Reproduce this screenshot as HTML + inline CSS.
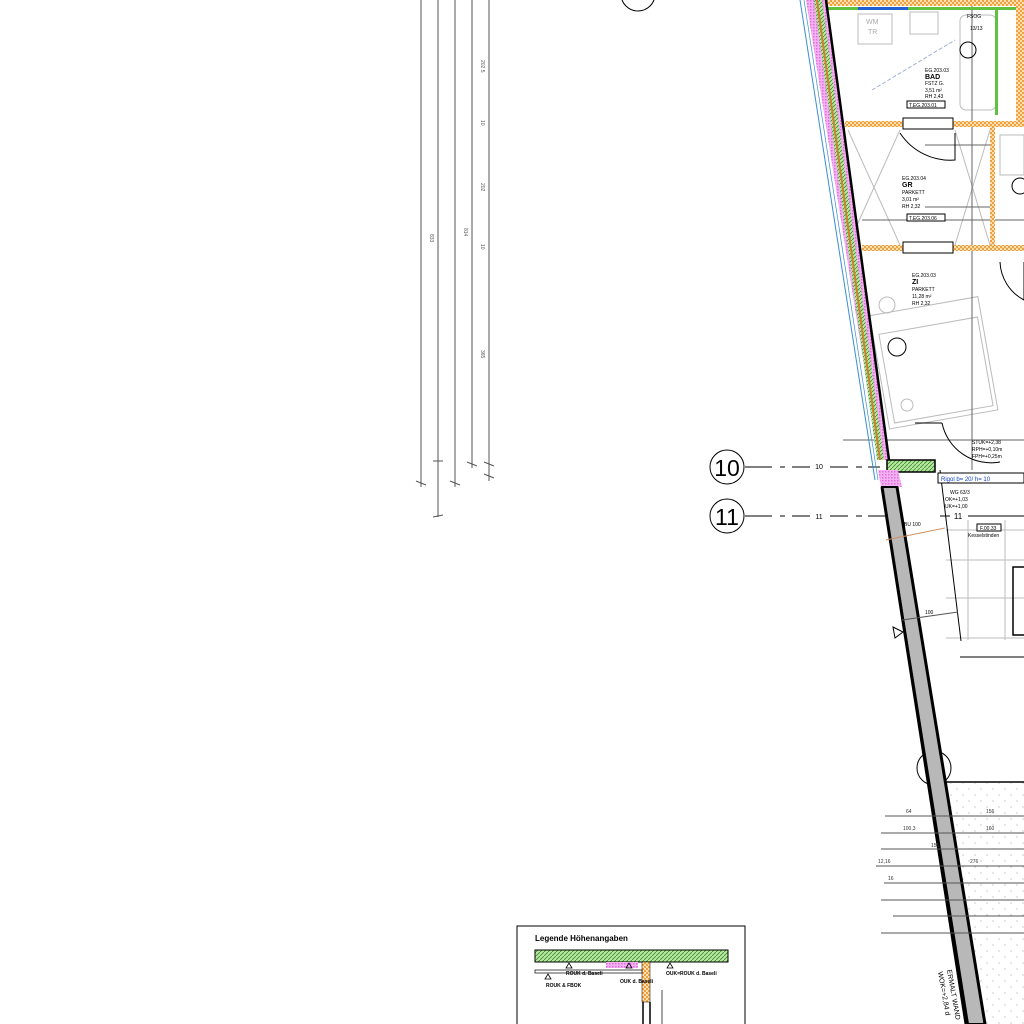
<!DOCTYPE html>
<html><head><meta charset="utf-8"><style>
html,body{margin:0;padding:0;background:#fff;width:1024px;height:1024px;overflow:hidden}
svg{display:block}
text{font-family:"Liberation Sans",sans-serif}
</style></head><body>
<svg width="1024" height="1024" viewBox="0 0 1024 1024" xmlns="http://www.w3.org/2000/svg">
<defs>
<pattern id="org" width="4" height="4" patternUnits="userSpaceOnUse"><rect width="4" height="4" fill="#f0a040"/><rect width="2" height="2" fill="#fde0b0"/><rect x="2" y="2" width="2" height="2" fill="#fde0b0"/></pattern>
<pattern id="grn" width="4" height="4" patternUnits="userSpaceOnUse"><rect width="4" height="4" fill="#b8e8a0"/><path d="M0 4L4 0" stroke="#3a8a30" stroke-width="0.8"/></pattern>
<pattern id="pnk" width="3" height="3" patternUnits="userSpaceOnUse"><rect width="3" height="3" fill="#f4b0f0"/><rect width="1.5" height="1.5" fill="#e070e0"/></pattern>
<pattern id="dots" width="12" height="12" patternUnits="userSpaceOnUse"><rect width="12" height="12" fill="#fff"/><circle cx="3" cy="3" r="0.6" fill="#aaa"/><circle cx="9" cy="9" r="0.6" fill="#aaa"/></pattern>
</defs>

<!-- left dimension lines -->
<g stroke="#555" stroke-width="1">
<line x1="421" y1="0" x2="421" y2="487"/><line x1="438" y1="0" x2="438" y2="517"/>
<line x1="455" y1="0" x2="455" y2="487"/><line x1="472" y1="0" x2="472" y2="468"/>
<line x1="489" y1="0" x2="489" y2="481"/>
<line x1="416" y1="481" x2="426" y2="485"/><line x1="433" y1="461" x2="443" y2="461"/><line x1="433" y1="517" x2="443" y2="515"/>
<line x1="450" y1="481" x2="460" y2="485"/><line x1="467" y1="462" x2="477" y2="466"/><line x1="484" y1="462" x2="494" y2="466"/><line x1="484" y1="474" x2="494" y2="478"/>
</g>
<g font-size="5" fill="#555">
<text x="430" y="234" transform="rotate(90 430 234)">833</text>
<text x="464" y="228" transform="rotate(90 464 228)">814</text>
<text x="481" y="60" transform="rotate(90 481 60)">202.5</text>
<text x="481" y="120" transform="rotate(90 481 120)">10</text>
<text x="481" y="183" transform="rotate(90 481 183)">202</text>
<text x="481" y="244" transform="rotate(90 481 244)">10</text>
<text x="481" y="350" transform="rotate(90 481 350)">365</text>
</g>

<!-- grid circles -->
<g stroke="#000" fill="none" stroke-width="1">
<circle cx="638" cy="-6" r="17"/>
<circle cx="727" cy="467" r="17"/><circle cx="727" cy="516" r="17"/>
<line x1="745" y1="467" x2="772" y2="467"/><line x1="780" y1="467" x2="785" y2="467"/><line x1="792" y1="467" x2="810" y2="467"/><line x1="830" y1="467" x2="848" y2="467"/><line x1="856" y1="467" x2="862" y2="467"/><line x1="868" y1="467" x2="880" y2="467"/>
<line x1="745" y1="516" x2="772" y2="516"/><line x1="780" y1="516" x2="785" y2="516"/><line x1="792" y1="516" x2="810" y2="516"/><line x1="830" y1="516" x2="848" y2="516"/><line x1="856" y1="516" x2="862" y2="516"/><line x1="868" y1="516" x2="885" y2="516"/>
<line x1="940" y1="516" x2="950" y2="516"/><line x1="968" y1="516" x2="1024" y2="516"/>
</g>
<text x="727" y="476" font-size="23" text-anchor="middle" fill="#000">10</text>
<text x="727" y="525" font-size="23" text-anchor="middle" fill="#000">11</text>
<text x="819" y="469" font-size="7" text-anchor="middle">10</text>
<text x="819" y="519" font-size="7" text-anchor="middle">11</text>
<text x="958" y="519" font-size="8" text-anchor="middle">11</text>

<!-- room interior elements -->
<g stroke="#bbb" fill="none" stroke-width="1">
<rect x="858" y="14" width="34" height="30"/><rect x="910" y="12" width="28" height="22"/>
<rect x="960" y="15" width="36" height="95" rx="6"/>
<path d="M848 130L900 245M848 245L900 130M955 130L990 245M955 245L990 130"/>
<rect x="886" y="325" width="100" height="90" transform="rotate(-10 936 370)"/>
<rect x="880" y="305" width="110" height="115" transform="rotate(-10 936 370)"/>
<circle cx="887" cy="305" r="8"/><circle cx="907" cy="405" r="6"/>
<path d="M946 530H1024M946 560H1024M946 598H1024M946 638H1024M968 520V640M1005 520V640"/>
<path d="M1000 135h24v40h-24z"/>
</g>
<g stroke="#666" stroke-width="1">
<line x1="972" y1="0" x2="972" y2="470"/>
<line x1="843" y1="440" x2="1024" y2="440"/>
<line x1="925" y1="145" x2="990" y2="145"/><line x1="925" y1="207" x2="990" y2="207"/>
<line x1="862" y1="220" x2="1024" y2="220"/>
</g>
<g stroke="#000" fill="none" stroke-width="1">
<path d="M900 133A60 60 0 0 0 955 160V133"/>
<path d="M1000 262A45 45 0 0 0 1024 300V262"/>
<path d="M942 423A50 50 0 0 0 1000 462"/>
<path d="M915 423H942"/>
<path d="M940 470L961 641"/>
<line x1="960" y1="657" x2="1024" y2="657"/>
<circle cx="968" cy="50" r="8"/><circle cx="897" cy="347" r="9"/><circle cx="1020" cy="186" r="8"/>
<circle cx="934" cy="768" r="17"/>
<rect x="1013" y="567" width="12" height="68" stroke-width="1.5"/>
</g>

<!-- horizontal walls -->
<rect x="820" y="0" width="204" height="6" fill="url(#org)"/>
<rect x="826" y="7" width="198" height="3" fill="#60c040"/>
<rect x="858" y="7" width="50" height="3" fill="#2060d0"/>
<rect x="845" y="121" width="179" height="6" fill="url(#org)"/>
<rect x="862" y="245" width="162" height="6" fill="url(#org)"/>
<rect x="990" y="121" width="5" height="130" fill="url(#org)"/>
<rect x="1016" y="0" width="8" height="121" fill="url(#org)"/>
<rect x="995" y="10" width="3" height="105" fill="#60c040"/>
<g fill="#fff" stroke="#000" stroke-width="1">
<rect x="903" y="118" width="50" height="11"/><rect x="903" y="242" width="50" height="11"/>
<rect x="938" y="473" width="86" height="10"/>
</g>
<text x="941" y="481" font-size="6" fill="#1040c0">Rigol b= 20/ h= 10</text>

<!-- upper slanted wall layers -->
<polygon points="806,0 826,0 889,460 879,460" fill="url(#pnk)"/>
<polygon points="814,0 822,0 884,460 877,460" fill="url(#grn)"/>
<line x1="817" y1="0" x2="880" y2="460" stroke="#d08030" stroke-width="2"/>
<line x1="826" y1="0" x2="889" y2="460" stroke="#000" stroke-width="2.5"/>
<line x1="800" y1="0" x2="875" y2="480" stroke="#3a8ed0" stroke-width="1"/>
<line x1="804" y1="0" x2="878" y2="480" stroke="#3a8ed0" stroke-width="0.7"/>
<rect x="887" y="460" width="48" height="12" fill="url(#grn)" stroke="#000" stroke-width="1.5"/>
<polygon points="878,470 898,470 902,487 881,487" fill="url(#pnk)"/>

<!-- dotted exterior -->
<polygon points="940,783 1024,783 1024,1024 985,1024" fill="url(#dots)"/>
<line x1="940" y1="782" x2="1024" y2="782" stroke="#000" stroke-width="1.5"/>
<!-- lower gray wall -->
<polygon points="882,487 897,487 985,1024 968,1024" fill="#b8b8b8" stroke="#000" stroke-width="2"/>
<line x1="882" y1="487" x2="966" y2="1024" stroke="#000" stroke-width="3"/>
<line x1="897" y1="487" x2="985" y2="1024" stroke="#000" stroke-width="3"/>
<line x1="886" y1="540" x2="945" y2="528" stroke="#d09060" stroke-width="1"/>
<line x1="902" y1="620" x2="958" y2="612" stroke="#555" stroke-width="1"/>
<path d="M893 627l10 5-8 6z" fill="none" stroke="#000"/>

<!-- bottom-right dimension lines -->
<g stroke="#555" stroke-width="1">
<line x1="885" y1="816" x2="1024" y2="816"/><line x1="881" y1="833" x2="1024" y2="833"/>
<line x1="881" y1="849" x2="1024" y2="849"/><line x1="876" y1="866" x2="1024" y2="866"/>
<line x1="884" y1="883" x2="1024" y2="883"/><line x1="881" y1="900" x2="1024" y2="900"/>
<line x1="893" y1="916" x2="1024" y2="916"/><line x1="881" y1="933" x2="1024" y2="933"/>
</g>
<g font-size="5" fill="#333">
<text x="906" y="813">64</text><text x="986" y="813">156</text>
<text x="903" y="830">100,3</text><text x="986" y="830">160</text>
<text x="931" y="847">151</text><text x="970" y="863">276</text>
<text x="878" y="863">12,16</text><text x="888" y="880">16</text>
</g>
<text x="947" y="970" font-size="7" transform="rotate(80 947 970)">ERMALT WAND</text>
<text x="938" y="972" font-size="7" transform="rotate(80 938 972)">WOK=+2,84 d</text>

<!-- room labels -->
<g font-size="5" fill="#000">
<text x="925" y="72">EG.203.03</text><text x="925" y="79" font-size="7" font-weight="bold">BAD</text>
<text x="925" y="85">FSTZ G.</text><text x="925" y="92">3,51 m²</text><text x="925" y="98">RH 2,43</text>
<text x="902" y="180">EG.203.04</text><text x="902" y="187" font-size="7" font-weight="bold">GR</text>
<text x="902" y="194">PARKETT</text><text x="902" y="201">3,01 m²</text><text x="902" y="208">RH 2,32</text>
<text x="912" y="277">EG.203.03</text><text x="912" y="284" font-size="7" font-weight="bold">ZI</text>
<text x="912" y="291">PARKETT</text><text x="912" y="298">11,28 m²</text><text x="912" y="305">RH 2,32</text>
<text x="972" y="444">STUK=+2,38</text><text x="972" y="451">RPH=+0,10m</text><text x="972" y="458">FPH=+0,25m</text>
<text x="950" y="494">WG 63/3</text><text x="945" y="501">OK=+1,03</text><text x="945" y="508">UK=+1,00</text>
<text x="968" y="537">Kesselstinden</text>
<text x="967" y="18">FSOG</text><text x="970" y="30">13/13</text>
<text x="866" y="24" fill="#aaa" font-size="7">WM</text><text x="868" y="34" fill="#aaa" font-size="7">TR</text>
<text x="904" y="526">BU 100</text><text x="925" y="614">100</text>
</g>
<g fill="#fff" stroke="#000" stroke-width="1">
<rect x="907" y="101" width="38" height="7"/><rect x="907" y="214" width="38" height="7"/><rect x="977" y="524" width="24" height="7"/>
</g>
<g font-size="5" fill="#000"><text x="909" y="107">T.EG.203.01</text><text x="909" y="220">T.EG.203.06</text><text x="980" y="530">F.00.33</text></g>
<line x1="872" y1="90" x2="955" y2="40" stroke="#a0b0d0" stroke-width="1" stroke-dasharray="4 2"/>

<!-- legend -->
<rect x="517" y="926" width="228" height="110" fill="#fff" stroke="#000" stroke-width="1"/>
<text x="535" y="941" font-size="8" font-weight="bold">Legende Höhenangaben</text>
<rect x="535" y="950" width="193" height="12" fill="url(#grn)" stroke="#000" stroke-width="1"/>
<rect x="606" y="962" width="32" height="6" fill="url(#pnk)"/>
<rect x="642" y="962" width="8" height="40" fill="url(#org)" stroke="#000" stroke-width="0.5"/>
<rect x="535" y="970" width="107" height="3" fill="#fff" stroke="#000" stroke-width="0.7"/>
<line x1="643" y1="1002" x2="643" y2="1024" stroke="#000" stroke-width="1.5"/>
<line x1="650" y1="1002" x2="650" y2="1024" stroke="#000" stroke-width="1.5"/>
<line x1="662" y1="990" x2="662" y2="1024" stroke="#000" stroke-width="0.7"/>
<g font-size="5" font-weight="bold">
<text x="566" y="975">ROUK d. Baseli</text><text x="620" y="983">OUK d. Baseli</text>
<text x="666" y="975">OUK=ROUK d. Baseli</text><text x="546" y="987">ROUK &amp; FBOK</text>
</g>
<g fill="none" stroke="#000" stroke-width="0.8">
<path d="M566 968l3-5 3 5z"/><path d="M626 968l3-5 3 5z"/><path d="M667 968l3-5 3 5z"/><path d="M545 979l3-5 3 5z"/>
</g>
</svg>
</body></html>
